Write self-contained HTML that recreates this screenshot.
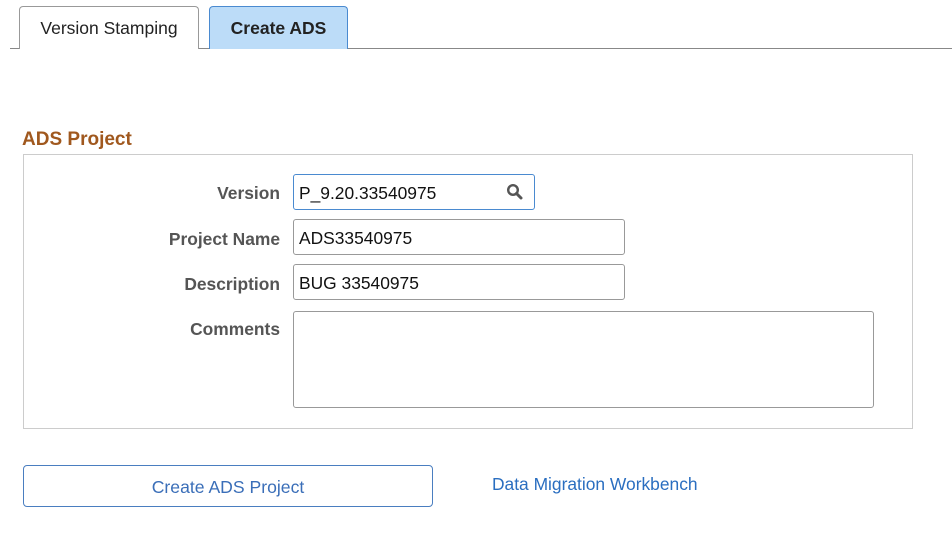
<!DOCTYPE html>
<html><head><style>
body{margin:0;width:952px;height:537px;background:#fff;font-family:"Liberation Sans",sans-serif;position:relative;overflow:hidden}
.a{position:absolute;box-sizing:border-box}
.tab{top:6px;height:43px;border:1px solid #999;border-bottom:none;border-radius:4px 4px 0 0;font-size:17.5px;text-align:center;line-height:42px;color:#222}
.lbl{font-size:17.4px;font-weight:bold;color:#555;text-align:right;width:200px;left:80px}
.in{left:293px;border:1px solid #999;border-radius:3px;height:36px;font-size:17.4px;color:#111;padding-left:5px;line-height:36px}
</style></head><body>
<div class="a" style="left:10px;top:48px;width:942px;height:1px;background:#888"></div>
<div class="a tab" style="left:19px;width:180px;background:#fff">Version Stamping</div>
<div class="a tab" style="left:209px;width:139px;background:#bcdcf8;border-color:#4a8ad0;font-weight:bold;height:43px">Create ADS</div>
<div class="a" style="left:22px;top:129px;font-size:19px;font-weight:bold;color:#a0581e">ADS Project</div>
<div class="a" style="left:23px;top:154px;width:890px;height:275px;border:1px solid #ccc"></div>
<div class="a lbl" style="top:183px">Version</div>
<div class="a lbl" style="top:229px">Project Name</div>
<div class="a lbl" style="top:274px">Description</div>
<div class="a lbl" style="top:319px">Comments</div>
<div class="a in" style="top:174px;width:242px;border-color:#4a8ad0">P_9.20.33540975
<svg class="a" style="left:212px;top:8px" width="18" height="18" viewBox="0 0 18 18"><circle cx="7" cy="7" r="4.8" fill="none" stroke="#555" stroke-width="2.4"/><line x1="10.5" y1="10.5" x2="15" y2="15" stroke="#555" stroke-width="3" stroke-linecap="round"/></svg></div>
<div class="a in" style="top:219px;width:332px">ADS33540975</div>
<div class="a in" style="top:264px;width:332px">BUG 33540975</div>
<div class="a in" style="top:311px;width:581px;height:97px"></div>
<div class="a" style="left:23px;top:465px;width:410px;height:42px;border:1px solid #4a7ec0;border-radius:4px;text-align:center;line-height:42px;font-size:17.6px;color:#3a6eb8">Create ADS Project</div>
<div class="a" style="left:492px;top:474px;font-size:17.4px;color:#2a6ec0">Data Migration Workbench</div>
</body></html>
